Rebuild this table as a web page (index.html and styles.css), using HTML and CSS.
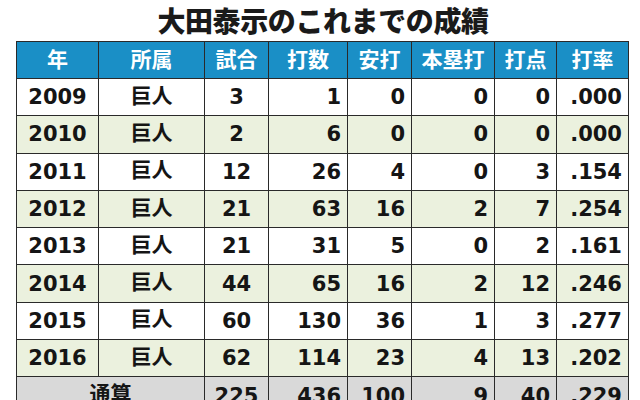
FILE: index.html
```html
<!DOCTYPE html>
<html lang="ja">
<head>
<meta charset="utf-8">
<link rel="stylesheet" href="styles.css">
</head>
<body>
<div class="page">
  <h1 class="title">大田泰示のこれまでの成績</h1>
  <table class="stats">
    <colgroup>
      <col class="c-year"><col class="c-team"><col class="c-g"><col class="c-ab"><col class="c-h"><col class="c-hr"><col class="c-rbi"><col class="c-avg">
    </colgroup>
    <thead>
      <tr><th>年</th><th>所属</th><th>試合</th><th>打数</th><th>安打</th><th>本塁打</th><th>打点</th><th>打率</th></tr>
    </thead>
    <tbody>
      <tr class="odd"><td class="ctr">2009</td><td class="ctr jp">巨人</td><td class="ctr">3</td><td>1</td><td>0</td><td>0</td><td>0</td><td>.000</td></tr>
      <tr class="even"><td class="ctr">2010</td><td class="ctr jp">巨人</td><td class="ctr">2</td><td>6</td><td>0</td><td>0</td><td>0</td><td>.000</td></tr>
      <tr class="odd"><td class="ctr">2011</td><td class="ctr jp">巨人</td><td class="ctr">12</td><td>26</td><td>4</td><td>0</td><td>3</td><td>.154</td></tr>
      <tr class="even"><td class="ctr">2012</td><td class="ctr jp">巨人</td><td class="ctr">21</td><td>63</td><td>16</td><td>2</td><td>7</td><td>.254</td></tr>
      <tr class="odd"><td class="ctr">2013</td><td class="ctr jp">巨人</td><td class="ctr">21</td><td>31</td><td>5</td><td>0</td><td>2</td><td>.161</td></tr>
      <tr class="even"><td class="ctr">2014</td><td class="ctr jp">巨人</td><td class="ctr">44</td><td>65</td><td>16</td><td>2</td><td>12</td><td>.246</td></tr>
      <tr class="odd"><td class="ctr">2015</td><td class="ctr jp">巨人</td><td class="ctr">60</td><td>130</td><td>36</td><td>1</td><td>3</td><td>.277</td></tr>
      <tr class="even"><td class="ctr">2016</td><td class="ctr jp">巨人</td><td class="ctr">62</td><td>114</td><td>23</td><td>4</td><td>13</td><td>.202</td></tr>
      <tr class="total"><td class="ctr jp" colspan="2">通算</td><td class="ctr">225</td><td>436</td><td>100</td><td>9</td><td>40</td><td>.229</td></tr>
    </tbody>
  </table>
</div>
</body>
</html>
```
FILE: styles.css
```css
html, body {
  margin: 0;
  padding: 0;
  background: #ffffff;
}
.page {
  width: 640px;
  height: 400px;
  overflow: hidden;
  font-family: "DejaVu Sans", "Noto Sans CJK JP", sans-serif;
  color: #151515;
}
.title {
  margin: 0;
  padding: 3px 0 0 6px;
  height: 41px;
  box-sizing: border-box;
  text-align: center;
  font-family: "Noto Sans CJK JP", sans-serif;
  font-weight: 900;
  font-size: 28px;
  line-height: 34px;
  letter-spacing: -0.4px;
  color: #1a1a1a;
}
.stats {
  margin: 0 0 0 16px;
  width: 612px;
  border-collapse: collapse;
  table-layout: fixed;
}
.c-year { width: 82px; }
.c-team { width: 106px; }
.c-g { width: 64px; }
.c-ab { width: 79px; }
.c-h { width: 64px; }
.c-hr { width: 83px; }
.c-rbi { width: 62px; }
.c-avg { width: 72px; }
.stats th, .stats td {
  border: 1px solid #2a2a2a;
  padding: 0 6px 0 4px;
  white-space: nowrap;
}
.stats th {
  background: #1a8fc6;
  color: #ffffff;
  font-family: "Noto Sans CJK JP", sans-serif;
  font-weight: 700;
  font-size: 21px;
  height: 31px;
  line-height: 24px;
  text-align: center;
  padding: 0 0 5px 0;
}
.stats td {
  height: 36.3px;
  font-weight: 700;
  font-size: 21px;
  line-height: 24px;
  text-align: right;
}
.stats td.ctr {
  text-align: center;
  padding: 0;
}
.stats td.jp {
  font-family: "Noto Sans CJK JP", sans-serif;
  height: 29.3px;
  padding-bottom: 7px;
}
.odd td { background: #ffffff; }
.even td { background: #ebf1de; }
.total td { background: #d9d9d9; }
```
